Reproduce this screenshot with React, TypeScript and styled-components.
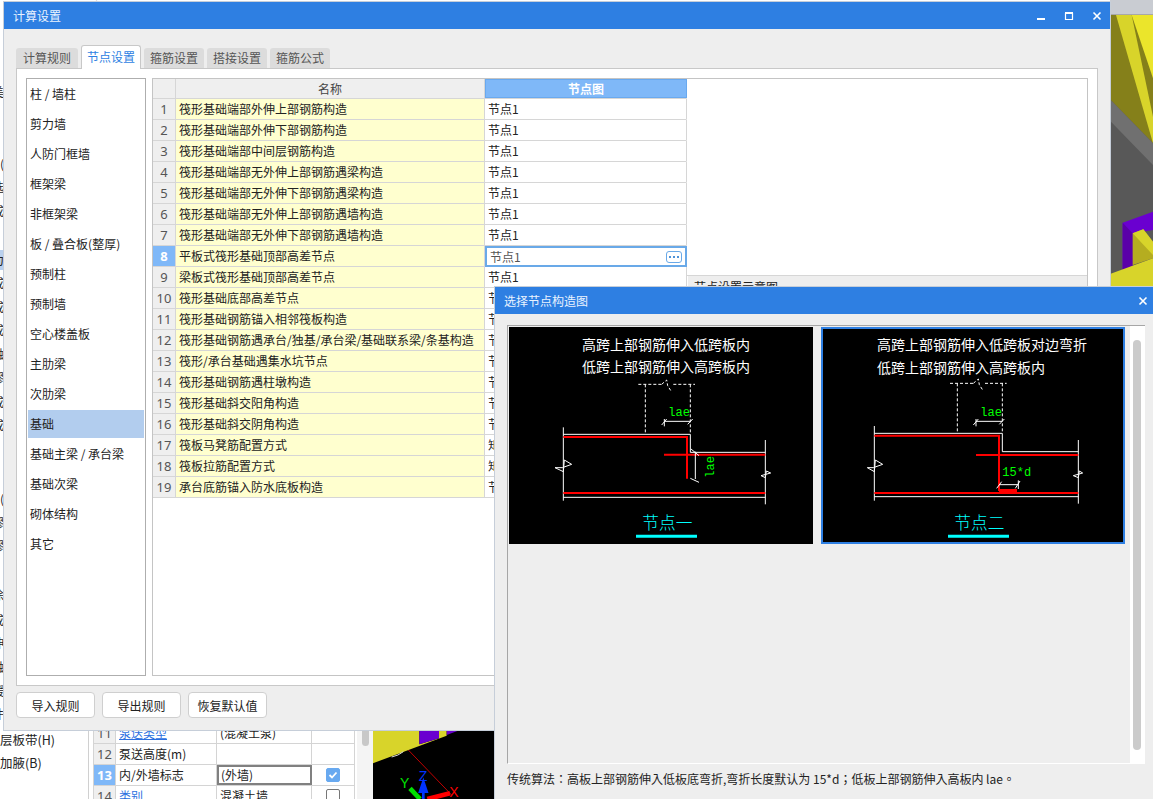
import React from "react";
import styled, { createGlobalStyle } from "styled-components";

const CJK = `"Noto Sans CJK SC", "Noto Sans", sans-serif`;

const Global = createGlobalStyle`
  html, body { margin: 0; padding: 0; background: #fff; }
  body { font-family: ${CJK}; font-size: 12px; color: #222; overflow: hidden; }
  * { box-sizing: border-box; }
`;

const Desktop = styled.div`
  position: relative;
  width: 1153px;
  height: 799px;
  overflow: hidden;
  background: #fff;
`;

/* ---- application behind the dialogs ---- */
const TopStrip = styled.div`
  position: absolute;
  left: 0;
  top: 0;
  width: 1110px;
  height: 2px;
  overflow: hidden;
  display: flex;
  gap: 42px;
  padding-left: 16px;
  white-space: nowrap;
`;
const TopBit = styled.span`
  display: block;
  margin-top: -14px;
  line-height: 16px;
  color: #333;
`;
const LeftStrip = styled.div`
  position: absolute;
  left: 0;
  top: 0;
  width: 4px;
  height: 730px;
  overflow: hidden;
`;
const LeftMark = styled.span<{ $y: number; $active?: boolean }>`
  position: absolute;
  right: 0;
  top: ${(p) => p.$y - 10}px;
  height: 20px;
  line-height: 20px;
  white-space: nowrap;
  color: #222;
  background: ${(p) => (p.$active ? "#b9d0ee" : "transparent")};
`;
const SceneRight = styled.div`
  position: absolute;
  left: 1110px;
  top: 0;
  width: 43px;
  height: 287px;
  display: flex;
  flex-direction: column;
`;
const SceneBar = styled.div`
  height: 15px;
  flex: none;
  background: #c9ccd2;
  border-bottom: 1px solid #a8a8a8;
`;
const SceneSvg = styled.svg`
  display: block;
  flex: 1;
  width: 43px;
`;
const BackPane = styled.div`
  position: absolute;
  left: 0;
  top: 730px;
  width: 495px;
  height: 69px;
  display: flex;
  background: #fff;
`;
const BackMenu = styled.div`
  width: 89px;
  flex: none;
  border-right: 1px solid #d0d0d0;
`;
const BackMenuItem = styled.div`
  height: 23px;
  line-height: 20px;
  font-size: 12.5px;
  color: #222;
  white-space: nowrap;
`;
const BackTableWrap = styled.div`
  width: 284px;
  flex: none;
  display: flex;
  padding-left: 4px;
  overflow: hidden;
`;
const BackTable = styled.div`
  width: 262px;
  flex: none;
  margin-top: -7px;
  border-left: 1px solid #d4d4d4;
`;
const BackRow = styled.div`
  display: grid;
  grid-template-columns: 22px 101px 95px 43px;
  height: 21px;
  border-bottom: 1px solid #d4d4d4;
`;
const BackIndex = styled.div<{ $active?: boolean }>`
  background: ${(p) => (p.$active ? "#7fb8f8" : "#efefef")};
  color: ${(p) => (p.$active ? "#fff" : "#555")};
  font: ${(p) => (p.$active ? 700 : 400)} 13px "Noto Sans", sans-serif;
  line-height: 20px;
  text-align: center;
  border-right: 1px solid #d4d4d4;
`;
const BackCell = styled.div<{ $link?: boolean; $focus?: boolean }>`
  padding-left: ${(p) => (p.$focus ? "2px" : "3px")};
  line-height: ${(p) => (p.$focus ? "16px" : "20px")};
  color: ${(p) => (p.$link ? "#2b6fe0" : "#222")};
  text-decoration: ${(p) => (p.$link ? "underline" : "none")};
  border-right: 1px solid #d4d4d4;
  border: ${(p) => (p.$focus ? "2px solid #808080" : undefined)};
  white-space: nowrap;
  overflow: hidden;
`;
const BackCheckCell = styled.div`
  display: flex;
  align-items: center;
  justify-content: center;
  border-right: 1px solid #d4d4d4;
`;
const CheckBox = styled.span<{ $on?: boolean }>`
  width: 14px;
  height: 14px;
  border-radius: 2px;
  display: flex;
  align-items: center;
  justify-content: center;
  background: ${(p) => (p.$on ? "#68a9f0" : "#fff")};
  border: 1px solid ${(p) => (p.$on ? "#68a9f0" : "#777")};
`;
const BackScroll = styled.div`
  width: 16px;
  flex: none;
  margin-left: 2px;
  background: #f4f4f4;
  display: flex;
  justify-content: center;
`;
const BackThumb = styled.div`
  width: 7px;
  height: 16px;
  background: #c8c8c8;
  border-radius: 0 0 4px 4px;
`;
const BackScene = styled.svg`
  display: block;
  width: 122px;
  height: 69px;
  flex: none;
`;

/* ---- dialogs ---- */
const Dialog = styled.section<{ $x: number; $y: number; $w: number; $h: number; $layer: number }>`
  position: absolute;
  left: ${(p) => p.$x}px;
  top: ${(p) => p.$y}px;
  width: ${(p) => p.$w}px;
  height: ${(p) => p.$h}px;
  z-index: ${(p) => p.$layer};
  background: #eeeeee;
  display: flex;
  flex-direction: column;
  box-shadow: 0 0 0 1px #c6ced9;
`;
const TitleBar = styled.header<{ $endGap: number }>`
  height: 27px;
  flex: none;
  background: #2e7fe2;
  color: #eaf3ff;
  display: flex;
  align-items: center;
  padding: 0 ${(p) => p.$endGap}px 0 9px;
  font-size: 12px;
`;
const TitleText = styled.span`
  flex: 1;
`;
const WinButtons = styled.div`
  display: flex;
  align-items: center;
  gap: 18px;
`;
const WinIcon = styled.svg`
  display: block;
  width: 10px;
  height: 10px;
  color: #fff;
`;

const MainBody = styled.div`
  flex: 1;
  display: flex;
  flex-direction: column;
  padding: 16px 12px 12px;
`;
const Tabs = styled.nav`
  display: flex;
  gap: 3px;
  height: 23px;
  align-items: flex-end;
  flex: none;
`;
const Tab = styled.div<{ $active?: boolean }>`
  width: 60px;
  height: ${(p) => (p.$active ? "24px" : "20px")};
  margin-bottom: ${(p) => (p.$active ? "-1px" : "0")};
  text-align: center;
  line-height: ${(p) => (p.$active ? "22px" : "20px")};
  border-radius: 3px 3px 0 0;
  background: ${(p) => (p.$active ? "#fff" : "#dcdcdc")};
  color: ${(p) => (p.$active ? "#2e7fe2" : "#555")};
  border: ${(p) => (p.$active ? "1px solid #c8c8c8" : "none")};
  border-bottom: none;
  position: relative;
  z-index: ${(p) => (p.$active ? 1 : 0)};
  &:first-child { width: 62px; }
`;
const TabPanel = styled.div`
  height: 618px;
  flex: none;
  background: #fff;
  border: 1px solid #c8c8c8;
  padding: 9px;
  display: flex;
  gap: 6px;
`;
const SideList = styled.ul`
  list-style: none;
  margin: 0;
  padding: 1px;
  width: 120px;
  flex: none;
  border: 1px solid #aeaeae;
`;
const SideItem = styled.li<{ $active?: boolean }>`
  height: 28px;
  margin-bottom: 2px;
  line-height: 28px;
  padding-left: 2px;
  color: #222;
  background: ${(p) => (p.$active ? "#b2cdee" : "transparent")};
`;
const GridFrame = styled.div`
  flex: 1;
  display: flex;
  border: 1px solid #c4c4c4;
  min-width: 0;
`;
const GridTable = styled.div`
  width: 534px;
  flex: none;
  border-right: 1px solid #e2e2e2;
`;
const GridRow = styled.div`
  display: grid;
  grid-template-columns: 23px 309px 202px;
  height: 21px;
  border-bottom: 1px solid #d6d6d6;
`;
const GridHead = styled(GridRow)`
  height: 20px;
`;
const IndexCell = styled.div<{ $active?: boolean }>`
  background: ${(p) => (p.$active ? "#7fb8f8" : "#efefef")};
  color: ${(p) => (p.$active ? "#fff" : "#555")};
  font: ${(p) => (p.$active ? 700 : 400)} 13px "Noto Sans", sans-serif;
  line-height: 20px;
  text-align: center;
  border-right: 1px solid #d6d6d6;
`;
const HeadName = styled.div`
  background: #efefef;
  color: #444;
  line-height: 19px;
  text-align: center;
  border-right: 1px solid #d6d6d6;
`;
const HeadValue = styled.div`
  background: #7fb8f8;
  color: #fff;
  font-weight: 700;
  line-height: 19px;
  text-align: center;
  box-shadow: inset 0 0 0 1px #69a9ef;
`;
const NameCell = styled.div`
  background: #ffffcf;
  line-height: 20px;
  padding-left: 3px;
  color: #222;
  white-space: nowrap;
  overflow: hidden;
  border-right: 1px solid #d6d6d6;
`;
const ValueCell = styled.div`
  line-height: 20px;
  padding-left: 3px;
  color: #222;
  border-right: 1px solid #d6d6d6;
`;
const EditCell = styled.div`
  display: flex;
  align-items: center;
  justify-content: space-between;
  margin-bottom: -1px;
  height: 21px;
  padding: 0 3px 0 3px;
  color: #555;
  border: 2px solid #69a9e8;
`;
const MoreButton = styled.span`
  width: 16px;
  height: 12px;
  border: 1px solid #69a9e8;
  border-radius: 3px;
  display: flex;
  align-items: center;
  justify-content: center;
  gap: 2px;
`;
const MoreDot = styled.i`
  width: 2px;
  height: 2px;
  background: #4f93d8;
`;
const PreviewColumn = styled.div`
  flex: 1;
  display: flex;
  flex-direction: column;
`;
const PreviewBlank = styled.div`
  height: 197px;
  flex: none;
  border-bottom: 1px solid #d6d6d6;
`;
const PreviewPanel = styled.div`
  flex: 1;
  background: #eeeeee;
  padding: 2px 6px;
  margin-left: 1px;
  color: #222;
`;
const Footer = styled.footer`
  display: flex;
  gap: 7px;
  padding: 6px 0 0;
`;
const FootButton = styled.button`
  width: 79px;
  height: 26px;
  background: #fff;
  border: 1px solid #cfcfcf;
  border-radius: 4px;
  font: 12px ${CJK};
  color: #222;
  padding: 0;
`;

/* node picker */
const PickBody = styled.div`
  flex: 1;
  display: flex;
  flex-direction: column;
  padding: 11px 8px 0 12px;
`;
const PickPanel = styled.div`
  height: 439px;
  flex: none;
  display: flex;
  border-top: 1px solid #a6a6a6;
  border-left: 1px solid #a6a6a6;
  border-bottom: 1px solid #fff;
`;
const PickGallery = styled.div`
  flex: 1;
  display: flex;
  align-items: flex-start;
  gap: 8px;
  padding: 1px;
`;
const PickCard = styled.div<{ $selected?: boolean }>`
  width: 304px;
  height: 217px;
  background: #000;
  border: 2px solid ${(p) => (p.$selected ? "#2e7fe2" : "#000")};
`;
const DrawSvg = styled.svg`
  display: block;
  width: 300px;
  height: 213px;
`;
const PickScroll = styled.div`
  width: 15px;
  flex: none;
  background: #fff;
  padding: 14px 3px 13px;
`;
const PickThumb = styled.div`
  height: 100%;
  width: 8px;
  background: #cbcbcb;
  border-radius: 4px;
`;
const PickNote = styled.p`
  margin: 6px 0 0;
  line-height: 17px;
  font-family: "Noto Sans CJK TC", "Noto Sans", sans-serif;
  color: #222;
  white-space: nowrap;
`;

/* ---- data ---- */
const sideItems = ["柱 / 墙柱","剪力墙","人防门框墙","框架梁","非框架梁","板 / 叠合板(整厚)","预制柱","预制墙","空心楼盖板","主肋梁","次肋梁","基础","基础主梁 / 承台梁","基础次梁","砌体结构","其它"];
const rows = [
  ["筏形基础端部外伸上部钢筋构造","节点1"],["筏形基础端部外伸下部钢筋构造","节点1"],["筏形基础端部中间层钢筋构造","节点1"],
  ["筏形基础端部无外伸上部钢筋遇梁构造","节点1"],["筏形基础端部无外伸下部钢筋遇梁构造","节点1"],["筏形基础端部无外伸上部钢筋遇墙构造","节点1"],
  ["筏形基础端部无外伸下部钢筋遇墙构造","节点1"],["平板式筏形基础顶部高差节点","节点1"],["梁板式筏形基础顶部高差节点","节点1"],
  ["筏形基础底部高差节点","节点1"],["筏形基础钢筋锚入相邻筏板构造","节点1"],["筏形基础钢筋遇承台/独基/承台梁/基础联系梁/条基构造","节点1"],
  ["筏形/承台基础遇集水坑节点","节点1"],["筏形基础钢筋遇柱墩构造","节点1"],["筏形基础斜交阳角构造","节点1"],["筏形基础斜交阴角构造","节点1"],
  ["筏板马凳筋配置方式","矩形"],["筏板拉筋配置方式","矩形"],["承台底筋锚入防水底板构造","节点1"],
];
const leftMarks: [number, string, boolean?][] = [[92,"美"],[164,"("],[187,"选"],[211,"成"],[260,"力",true],[283,"成"],[307,"成"],[330,"成"],[354,"融"],[378,"缪"],[402,"成"],[425,"成"],[499,"("],[523,"缪"],[546,"缪"],[595,"涂"],[620,"成"],[643,"伸"],[667,"融"],[691,"缓"],[714,"件"]];
const topBits = ["下拉","属性设置","构件","钢筋工程量设置","导入导出","计算设置汇总","云应用","帮助中心","视图"];

const WHITE = "#ffffff";
const RED = "#ff0000";
const GREEN = "#00ff00";
const CYAN = "#00ffff";

type LP = { d: string; c?: string; w?: number; dash?: string };
const Ln = ({ d, c = WHITE, w = 3, dash }: LP) => (
  <path d={d} fill="none" stroke={c} strokeWidth={w} strokeDasharray={dash} />
);
const Caption = ({ x, y, children }: { x: number; y: number; children: React.ReactNode }) => (
  <text x={x} y={y} fill={WHITE} fontSize={42} fontWeight={400} fontFamily={CJK}>{children}</text>
);
const Dim = ({ x, y, children, rotate }: { x: number; y: number; children: React.ReactNode; rotate?: boolean }) => (
  <text x={x} y={y} fill={GREEN} fontSize={36} fontFamily={`"Liberation Mono", monospace`} transform={rotate ? `rotate(-90 ${x} ${y})` : undefined}>{children}</text>
);
const NodeName = ({ x, children }: { x: number; children: React.ReactNode }) => (
  <text x={x} y={611} fill={CYAN} fontSize={50} fontWeight={300} textAnchor="middle" fontFamily={CJK}>{children}</text>
);

const NodeOne = () => (
  <DrawSvg viewBox="18 12 900 639">
    <Caption x={231} y={75}>高跨上部钢筋伸入低跨板内</Caption>
    <Caption x={231} y={141}>低跨上部钢筋伸入高跨板内</Caption>
    <Ln d="M400 178H470M505 178H570M470 178L485 165L488 182L498 198M421 178V328M556 178V328" dash="9 6" />
    <Ln d="M478 289H556M470 300L485 282M548 298L563 282M478 282V304" />
    <Dim x={490} y={272}>lae</Dim>
    <Ln d="M175 307V527M175 328H556V382H781M781 345V538M175 517H781" />
    <Ln d="M175 336H546V461M477 389H781M175 504H781" c={RED} w={6} />
    <Ln d="M571 380V462M558 372L582 392M556 460L582 472" />
    <Dim x={626} y={458} rotate>lae</Dim>
    <Ln d="M150 428L175 440L178 405L200 418L172 428L150 428" />
    <Ln d="M768 452L781 458L784 438L797 444L768 452" />
    <NodeName x={487}>节点一</NodeName>
    <Ln d="M393 634H576" c={CYAN} w={9} />
  </DrawSvg>
);
const NodeTwo = () => (
  <DrawSvg viewBox="9 12 900 639">
    <Caption x={171} y={75}>高跨上部钢筋伸入低跨板对边弯折</Caption>
    <Caption x={171} y={143}>低跨上部钢筋伸入高跨板内</Caption>
    <Ln d="M390 175H460M495 175H560M460 175L475 162L478 179L488 195M412 175V325M547 175V325" dash="9 6" />
    <Ln d="M468 289H547M460 300L475 282M538 298L553 282M468 282V304" />
    <Dim x={481} y={272}>lae</Dim>
    <Ln d="M163 303V527M163 325H547V380H775M775 345V536M163 515H775" />
    <Ln d="M163 332H537V498M468 390H775M163 504H775" c={RED} w={6} />
    <Ln d="M537 497H591" c={RED} w={10} />
    <Dim x={547} y={452}>15*d</Dim>
    <Ln d="M537 479H595M530 490L545 470M586 490L600 468M595 466V492" />
    <Ln d="M142 428L163 440L166 405L188 418L160 428L142 428" />
    <Ln d="M760 452L775 458L778 438L788 444L760 452" />
    <NodeName x={478}>节点二</NodeName>
    <Ln d="M384 634H567" c={CYAN} w={9} />
  </DrawSvg>
);

const Minimize = () => (
  <WinIcon viewBox="0 0 10 10"><rect x="1" y="7" width="8" height="2" fill="currentColor" /></WinIcon>
);
const Maximize = () => (
  <WinIcon viewBox="0 0 10 10"><path d="M1.5 2.5h7v6h-7z M1 1.5h8" fill="none" stroke="currentColor" strokeWidth="1.2" /></WinIcon>
);
const Close = () => (
  <WinIcon viewBox="0 0 10 10"><path d="M1.5 1.5L8.5 8.5M8.5 1.5L1.5 8.5" fill="none" stroke="currentColor" strokeWidth="1.6" /></WinIcon>
);

export default function App() {
  return (
    <Desktop>
      <Global />
      <TopStrip>{topBits.map((t) => <TopBit key={t}>{t}</TopBit>)}</TopStrip>
      <LeftStrip>
        {leftMarks.map(([y, t, a]) => <LeftMark key={y} $y={y} $active={a}>{t}</LeftMark>)}
      </LeftStrip>

      <SceneRight>
        <SceneBar />
        <SceneSvg viewBox="30 45 129 816" preserveAspectRatio="none">
          <rect x="30" y="45" width="129" height="816" fill="#585858" />
          <polygon points="30,45 159,45 159,430 30,298" fill="#85801a" />
          <polygon points="48,45 95,45 159,350 159,430" fill="#d8d42a" />
          <polygon points="95,45 159,45 159,235" fill="#ebe52b" />
          <polygon points="30,298 159,430 159,495 30,362" fill="#707070" />
          <polygon points="68,668 159,635 159,690 98,700 98,805 68,815" fill="#6a00d0" />
          <polygon points="68,668 98,700 98,805 68,815" fill="#5a00a8" />
          <polygon points="98,700 130,688 159,725 159,775 98,795" fill="#b5ad20" />
          <polygon points="98,700 130,688 159,725 159,765" fill="#d8d42a" />
          <polygon points="30,822 159,775 159,861 30,861" fill="#d8d42a" />
        </SceneSvg>
      </SceneRight>

      <BackPane>
        <BackMenu>
          <BackMenuItem>层板带(H)</BackMenuItem>
          <BackMenuItem>加腋(B)</BackMenuItem>
        </BackMenu>
        <BackTableWrap>
          <BackTable>
            <BackRow><BackIndex>11</BackIndex><BackCell $link>泵送类型</BackCell><BackCell>(混凝土泵)</BackCell><BackCheckCell /></BackRow>
            <BackRow><BackIndex>12</BackIndex><BackCell>泵送高度(m)</BackCell><BackCell /><BackCheckCell /></BackRow>
            <BackRow>
              <BackIndex $active>13</BackIndex><BackCell>内/外墙标志</BackCell><BackCell $focus>(外墙)</BackCell>
              <BackCheckCell>
                <CheckBox $on>
                  <svg width="10" height="10" viewBox="0 0 10 10"><path d="M1.5 5L4 7.5L8.5 2.5" fill="none" stroke="#fff" strokeWidth="1.8" /></svg>
                </CheckBox>
              </BackCheckCell>
            </BackRow>
            <BackRow><BackIndex>14</BackIndex><BackCell $link>类别</BackCell><BackCell>混凝土墙</BackCell><BackCheckCell><CheckBox /></BackCheckCell></BackRow>
          </BackTable>
          <BackScroll><BackThumb /></BackScroll>
        </BackTableWrap>
        <BackScene viewBox="99 15 366 207">
          <rect x="99" y="15" width="366" height="207" fill="#000" />
          <polygon points="99,15 238,15 238,58 297,40 297,15 320,15 320,32 99,115" fill="#d8d42a" />
          <polygon points="238,15 297,15 297,40 238,58" fill="#6a00d0" />
          <polygon points="320,15 360,15 320,30" fill="#6a00d0" />
          <path d="M155 96Q175 92 190 80" fill="none" stroke="#ddd" strokeWidth="3" />
          <path d="M205 75L335 210" stroke="#c00000" strokeWidth="3" />
          <path d="M250 222V185M240 200L250 170L260 200Z" stroke="#0033ff" fill="#0033ff" strokeWidth="8" />
          <path d="M240 222L210 190" stroke="#00e000" strokeWidth="14" />
          <path d="M262 222L330 205" stroke="#f00" strokeWidth="14" />
          <text x="236" y="168" fill="#0033ff" fontSize="42" fontFamily="Liberation Sans, sans-serif">Z</text>
          <text x="180" y="190" fill="#00e000" fontSize="42" fontFamily="Liberation Sans, sans-serif">Y</text>
          <text x="328" y="215" fill="#f00" fontSize="42" fontFamily="Liberation Sans, sans-serif">X</text>
        </BackScene>
      </BackPane>

      <Dialog $x={4} $y={2} $w={1106} $h={728} $layer={2}>
        <TitleBar $endGap={8}>
          <TitleText>计算设置</TitleText>
          <WinButtons><Minimize /><Maximize /><Close /></WinButtons>
        </TitleBar>
        <MainBody>
          <Tabs>
            <Tab>计算规则</Tab>
            <Tab $active>节点设置</Tab>
            <Tab>箍筋设置</Tab>
            <Tab>搭接设置</Tab>
            <Tab>箍筋公式</Tab>
          </Tabs>
          <TabPanel>
            <SideList>
              {sideItems.map((s) => <SideItem key={s} $active={s === "基础"}>{s}</SideItem>)}
            </SideList>
            <GridFrame>
              <GridTable>
                <GridHead>
                  <IndexCell />
                  <HeadName>名称</HeadName>
                  <HeadValue>节点图</HeadValue>
                </GridHead>
                {rows.map(([name, value], i) => (
                  <GridRow key={name}>
                    <IndexCell $active={i === 7}>{i + 1}</IndexCell>
                    <NameCell>{name}</NameCell>
                    {i === 7 ? (
                      <EditCell>{value}<MoreButton><MoreDot /><MoreDot /><MoreDot /></MoreButton></EditCell>
                    ) : (
                      <ValueCell>{value}</ValueCell>
                    )}
                  </GridRow>
                ))}
              </GridTable>
              <PreviewColumn>
                <PreviewBlank />
                <PreviewPanel>节点设置示意图</PreviewPanel>
              </PreviewColumn>
            </GridFrame>
          </TabPanel>
          <Footer>
            <FootButton>导入规则</FootButton>
            <FootButton>导出规则</FootButton>
            <FootButton>恢复默认值</FootButton>
          </Footer>
        </MainBody>
      </Dialog>

      <Dialog $x={495} $y={287} $w={658} $h={512} $layer={3}>
        <TitleBar $endGap={5}>
          <TitleText>选择节点构造图</TitleText>
          <WinButtons><Close /></WinButtons>
        </TitleBar>
        <PickBody>
          <PickPanel>
            <PickGallery>
              <PickCard><NodeOne /></PickCard>
              <PickCard $selected><NodeTwo /></PickCard>
            </PickGallery>
            <PickScroll><PickThumb /></PickScroll>
          </PickPanel>
          <PickNote>传统算法：高板上部钢筋伸入低板底弯折,弯折长度默认为 15*d；低板上部钢筋伸入高板内 lae。</PickNote>
        </PickBody>
      </Dialog>
    </Desktop>
  );
}
